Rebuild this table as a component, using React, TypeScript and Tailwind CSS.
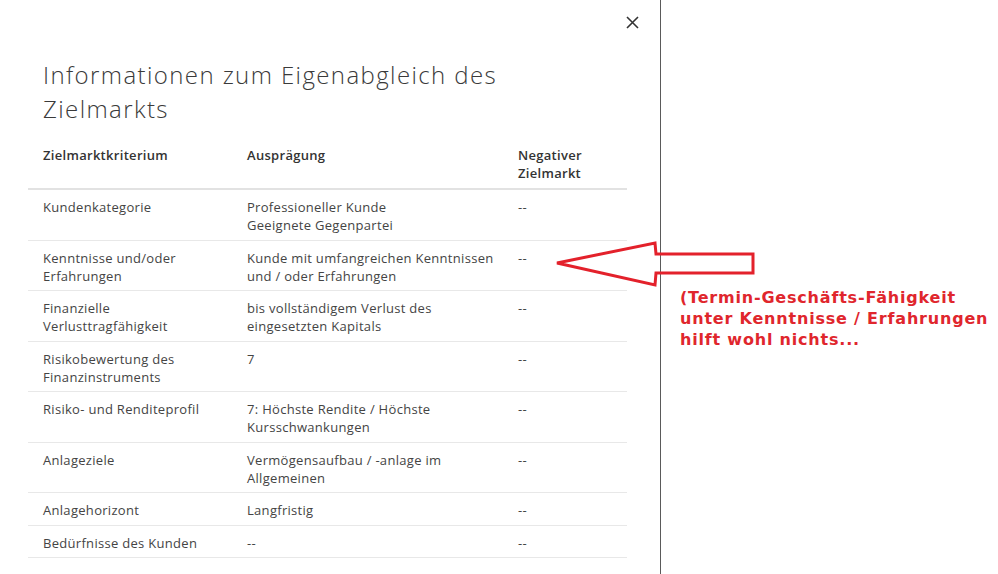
import React from 'react';

type Row = { label: string[]; value: string[]; negative: string };

const rows: Row[] = [
  { label: ['Kundenkategorie'], value: ['Professioneller Kunde', 'Geeignete Gegenpartei'], negative: '--' },
  { label: ['Kenntnisse und/oder', 'Erfahrungen'], value: ['Kunde mit umfangreichen Kenntnissen', 'und / oder Erfahrungen'], negative: '--' },
  { label: ['Finanzielle', 'Verlusttragfähigkeit'], value: ['bis vollständigem Verlust des', 'eingesetzten Kapitals'], negative: '--' },
  { label: ['Risikobewertung des', 'Finanzinstruments'], value: ['7'], negative: '--' },
  { label: ['Risiko- und Renditeprofil'], value: ['7: Höchste Rendite / Höchste', 'Kursschwankungen'], negative: '--' },
  { label: ['Anlageziele'], value: ['Vermögensaufbau / -anlage im', 'Allgemeinen'], negative: '--' },
  { label: ['Anlagehorizont'], value: ['Langfristig'], negative: '--' },
  { label: ['Bedürfnisse des Kunden'], value: ['--'], negative: '--' },
];

const Lines = ({ lines }: { lines: string[] }) => (
  <>
    {lines.map((l, i) => (
      <div key={i}>{l}</div>
    ))}
  </>
);

export default function App() {
  return (
    <div className="relative flex h-[574px] w-[998px] overflow-hidden bg-white font-['Open_Sans',sans-serif]">
      <div className="relative h-full w-[661px] border-r border-[#5a5a5a] pl-7">
        <button className="absolute right-[21px] top-[16px] text-[#333]" aria-label="Schließen">
          <svg width="13" height="13" viewBox="0 0 13 13" fill="none" stroke="currentColor" strokeWidth="1.6">
            <path d="M1 1l11 11M12 1L1 12" />
          </svg>
        </button>

        <h1 className="mt-[58px] pl-[15px] text-[24px] font-light leading-[34px] tracking-[1.4px] text-[#3a3a3a]">
          Informationen zum Eigenabgleich des
          <br />
          Zielmarkts
        </h1>

        <div className="mt-[20px] w-[599px] text-[13px] leading-[18px] tracking-[0.3px]">
          <div className="flex border-b-2 border-[#e2e2e2] pb-[6px] font-semibold text-[#333]">
            <div className="w-[204px] pl-[15px]">Zielmarktkriterium</div>
            <div className="w-[271px] pl-[15px]">Ausprägung</div>
            <div className="flex-1 pl-[15px]">
              Negativer
              <br />
              Zielmarkt
            </div>
          </div>
          {rows.map((r, i) => (
            <div key={i} className="flex border-b border-[#e8e8e8] pb-[5.5px] pt-[8px] text-[#444]">
              <div className="w-[204px] pl-[15px]">
                <Lines lines={r.label} />
              </div>
              <div className="w-[271px] pl-[15px]">
                <Lines lines={r.value} />
              </div>
              <div className="flex-1 pl-[15px]">{r.negative}</div>
            </div>
          ))}
        </div>
      </div>

      <svg className="absolute left-0 top-0" width="998" height="574" fill="none">
        <path
          d="M557 263 L655 243 L656 254 L753 254 L753 273 L656 273 L655 285 Z"
          stroke="#e3212b"
          strokeWidth="3"
          strokeLinejoin="miter"
        />
      </svg>

      <div className="absolute left-[680px] top-[287px] font-['DejaVu_Sans',sans-serif] text-[16px] font-bold leading-[21px] tracking-[0.8px] text-[#e0262d]">
        (Termin-Geschäfts-Fähigkeit
        <br />
        unter Kenntnisse / Erfahrungen
        <br />
        hilft wohl nichts...
      </div>
    </div>
  );
}
